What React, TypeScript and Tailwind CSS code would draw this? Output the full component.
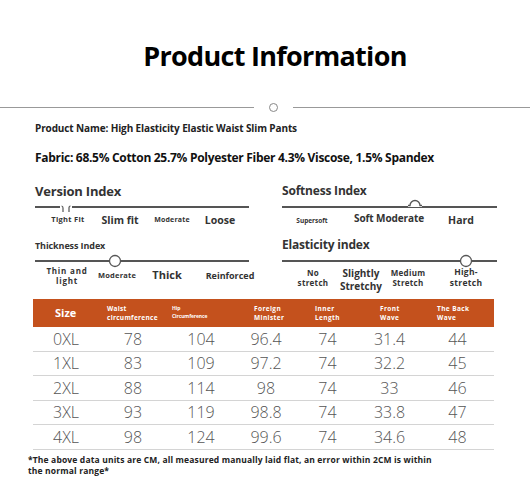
import React from "react";

type Marker = "notch" | "bump" | "circle";

interface Label {
    text: string[];
    cls: string;
}

interface ScaleProps {
    title: string;
    titleCls: string;
    marker: Marker;
    markerCls: string;
    labels: Label[];
}

const ROWS = [
    ["0XL", "78", "104", "96.4", "74", "31.4", "44"],
    ["1XL", "83", "109", "97.2", "74", "32.2", "45"],
    ["2XL", "88", "114", "98", "74", "33", "46"],
    ["3XL", "93", "119", "98.8", "74", "33.8", "47"],
    ["4XL", "98", "124", "99.6", "74", "34.6", "48"],
];

const COLS = "grid grid-cols-[66px_68px_68px_62px_61px_63px_73px]";

function MarkerShape({ marker }: { marker: Marker }) {
    if (marker === "notch") {
        return (
            <svg width="12" height="10" viewBox="0 0 12 10" className="block">
                <rect x="0" y="0" width="12" height="4" fill="white" />
                <path d="M1.5 1 Q3 1 3 3 L3 7 M9 7 L9 3 Q9 1 10.5 1" stroke="#555" strokeWidth="1.2" fill="none" />
            </svg>
        );
    }
    if (marker === "bump") {
        return (
            <svg width="14" height="10" viewBox="0 0 14 10" className="block">
                <rect x="0" y="5" width="14" height="3" fill="white" />
                <path d="M0 6.5 L2 6.5 A5 5 0 0 1 12 6.5 L14 6.5" stroke="#555" strokeWidth="1.3" fill="white" />
            </svg>
        );
    }
    return (
        <svg width="14" height="14" viewBox="0 0 14 14" className="block">
            <circle cx="7" cy="7" r="5.5" fill="white" stroke="#555" strokeWidth="1.3" />
        </svg>
    );
}

function Scale({ title, titleCls, marker, markerCls, labels }: ScaleProps) {
    return (
        <div className="flex flex-col">
            <div className={`h-[14px] flex items-center font-bold text-[#333] leading-none ${titleCls}`}>{title}</div>
            <div className="relative h-[2px] bg-[#555] mt-[8px]">
                <div className={`absolute ${markerCls}`}>
                    <MarkerShape marker={marker} />
                </div>
            </div>
            <div className="flex items-start mt-[6px]">
                {labels.map((l) => (
                    <div key={l.text.join(" ")} className={`text-center font-bold text-[#333] leading-[1.25] shrink-0 ${l.cls}`}>
                        {l.text.map((t) => (
                            <div key={t}>{t}</div>
                        ))}
                    </div>
                ))}
            </div>
        </div>
    );
}

export default function App() {
    return (
        <div className="w-[530px] h-[485px] bg-white overflow-hidden font-['Open_Sans',sans-serif] text-[#111]">

            {/* ── TITLE ── */}
            <h1 className="pt-[38px] pl-[20px] text-center text-[27px] font-bold leading-[36px] tracking-[-0.7px] text-black">
                Product Information
            </h1>

            {/* ── DIVIDER ── */}
            <div className="flex items-center mt-[29px]">
                <div className="h-[1.5px] bg-[#999] flex-1" />
                <div className="mx-[15px] w-[9px] h-[9px] rounded-full border-[1.5px] border-[#888]" />
                <div className="h-[1.5px] bg-[#999] w-[237px]" />
            </div>

            {/* ── INFO ── */}
            <div className="pl-[35px] mt-[9px]">
                <p className="text-[10px] font-bold leading-[14px] tracking-[-0.12px] text-[#222]">
                    Product Name: High Elasticity Elastic Waist Slim Pants
                </p>
                <p className="mt-[15px] text-[12px] font-bold leading-[16px] tracking-[-0.3px] text-[#111]">
                    Fabric: 68.5% Cotton 25.7% Polyester Fiber 4.3% Viscose, 1.5% Spandex
                </p>
            </div>

            {/* ── INDEX SCALES ── */}
            <div className="grid grid-cols-[214px_215px] gap-x-[33px] gap-y-[11px] pl-[35px] mt-[18px]">
                <Scale
                    title="Version Index"
                    titleCls="text-[13px] tracking-[-0.2px]"
                    marker="notch"
                    markerCls="left-[25px] top-[-1px]"
                    labels={[
                        { text: ["Tight Fit"], cls: "w-[44px] ml-[11px] text-[7.5px] tracking-[0.3px] mt-[1px]" },
                        { text: ["Slim fit"], cls: "w-[56px] ml-[2px] text-[10.5px]" },
                        { text: ["Moderate"], cls: "w-[46px] ml-[1px] text-[7px] tracking-[0.2px] mt-[2px]" },
                        { text: ["Loose"], cls: "w-[44px] ml-[3px] text-[10.5px]" },
                    ]}
                />
                <Scale
                    title="Softness Index"
                    titleCls="text-[12px] tracking-[-0.2px]"
                    marker="bump"
                    markerCls="left-[126px] top-[-7px]"
                    labels={[
                        { text: ["Supersoft"], cls: "w-[44px] ml-[8px] text-[6.5px] mt-[3px]" },
                        { text: ["Soft Moderate"], cls: "w-[80px] ml-[15px] text-[10px] tracking-[-0.1px] -mt-[2px]" },
                        { text: ["Hard"], cls: "w-[40px] ml-[12px] text-[10.5px]" },
                    ]}
                />
                <Scale
                    title="Thickness Index"
                    titleCls="text-[9px] tracking-[-0.1px]"
                    marker="circle"
                    markerCls="left-[73px] top-[-6px]"
                    labels={[
                        { text: ["Thin and", "light"], cls: "w-[48px] ml-[8px] text-[8px] tracking-[0.8px] -mt-[2px]" },
                        { text: ["Moderate"], cls: "w-[48px] ml-[2px] text-[7.5px] tracking-[0.2px] mt-[3px]" },
                        { text: ["Thick"], cls: "w-[44px] ml-[4px] text-[11px]" },
                        { text: ["Reinforced"], cls: "w-[56px] ml-[13px] text-[9px] mt-[2px]" },
                    ]}
                />
                <Scale
                    title="Elasticity index"
                    titleCls="text-[12px] tracking-[-0.2px]"
                    marker="circle"
                    markerCls="left-[177px] top-[-6px]"
                    labels={[
                        { text: ["No", "stretch"], cls: "w-[44px] ml-[9px] text-[8px] tracking-[0.3px]" },
                        { text: ["Slightly", "Stretchy"], cls: "w-[46px] ml-[3px] text-[10px] leading-[1.2] -mt-[1px]" },
                        { text: ["Medium", "Stretch"], cls: "w-[44px] ml-[2px] text-[8px] tracking-[0.3px]" },
                        { text: ["High-", "stretch"], cls: "w-[44px] ml-[14px] text-[8.5px] tracking-[0.3px] -mt-[1px]" },
                    ]}
                />
            </div>

            {/* ── SIZE TABLE ── */}
            <div className="ml-[33px] w-[461px] mt-[7px]">
                <div className={`${COLS} h-[28px] bg-[#c4511d] text-white font-bold items-center`}>
                    <div className="pl-[22px] text-[11px]">Size</div>
                    <div className="pl-[8px] text-[6.5px] leading-[9px] tracking-[0.3px]">Waist<br />circumference</div>
                    <div className="pl-[5px] text-[5px] leading-[8px] tracking-[-0.1px] -mt-[2px]">Hip<br />Circumference</div>
                    <div className="pl-[19px] text-[6.5px] leading-[9px] tracking-[0.4px]">Foreign<br />Minister</div>
                    <div className="pl-[18px] text-[6.5px] leading-[9px] tracking-[0.4px]">Inner<br />Length</div>
                    <div className="pl-[22px] text-[6.5px] leading-[9px] tracking-[0.4px]">Front<br />Wave</div>
                    <div className="pl-[16px] text-[6.5px] leading-[9px] tracking-[0.4px]">The Back<br />Wave</div>
                </div>
                {ROWS.map((row) => (
                    <div key={row[0]} className={`${COLS} h-[24.5px] items-center border-b-[1.5px] border-[#d4d4d4] text-[16px] font-light text-[#555] leading-none`}>
                        {row.map((v, i) => (
                            <div key={i} className="text-center">{v}</div>
                        ))}
                    </div>
                ))}
            </div>

            {/* ── NOTE ── */}
            <p className="ml-[28px] mt-[4px] w-[412px] text-[8.5px] font-bold leading-[11px] tracking-[0.15px] text-[#222]">
                *The above data units are CM, all measured manually laid flat, an error within 2CM is within the normal range*
            </p>
        </div>
    );
}
